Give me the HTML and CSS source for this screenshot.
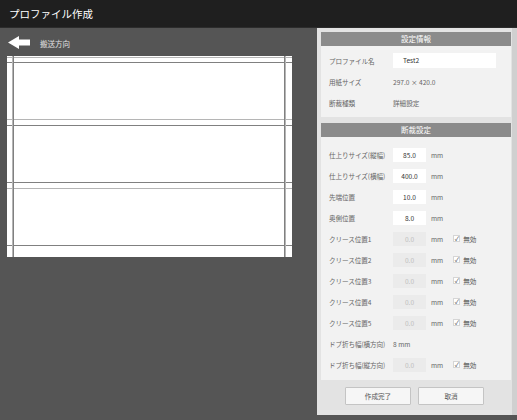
FILE: index.html
```html
<!DOCTYPE html>
<html lang="ja">
<head>
<meta charset="utf-8">
<title>プロファイル作成</title>
<link rel="stylesheet" href="styles.css">
</head>
<body>
<header class="topbar">プロファイル作成</header>
<main class="main">
  <section class="preview">
    <div class="direction">
      <svg class="arrow" width="22" height="13" viewBox="0 0 22 13"><path d="M0 6.5 L11 0 L11 3.5 L22 3.5 L22 9.5 L11 9.5 L11 13 Z" fill="#fff"/></svg>
      <span class="direction-label">搬送方向</span>
    </div>
    <svg class="paper" width="285" height="201" viewBox="0 0 285 201">
      <rect x="0" y="0" width="285" height="201" fill="#fff"/>
      <g stroke-width="1" shape-rendering="crispEdges">
        <line x1="0" y1="1.5" x2="285" y2="1.5" stroke="#b5b5b5"/>
        <line x1="0" y1="6.5" x2="285" y2="6.5" stroke="#808080"/>
        <line x1="0" y1="63.5" x2="285" y2="63.5" stroke="#b5b5b5"/>
        <line x1="0" y1="69.5" x2="285" y2="69.5" stroke="#808080"/>
        <line x1="0" y1="126.5" x2="285" y2="126.5" stroke="#808080"/>
        <line x1="0" y1="132.5" x2="285" y2="132.5" stroke="#b5b5b5"/>
        <line x1="0" y1="189.5" x2="285" y2="189.5" stroke="#808080"/>
        <line x1="5.5" y1="0" x2="5.5" y2="201" stroke="#b5b5b5"/>
        <line x1="6.5" y1="0" x2="6.5" y2="201" stroke="#808080"/>
        <line x1="277.5" y1="0" x2="277.5" y2="201" stroke="#808080"/>
        <line x1="278.5" y1="0" x2="278.5" y2="201" stroke="#b5b5b5"/>
      </g>
    </svg>
  </section>
  <aside class="panel">
    <div class="group">
      <div class="group-title">設定情報</div>
      <div class="group-body group-body-info">
        <div class="row"><span class="label">プロファイル名</span><span class="field field-wide">Test2</span></div>
        <div class="row"><span class="label">用紙サイズ</span><span class="value">297.0 × 420.0</span></div>
        <div class="row"><span class="label">断裁種類</span><span class="value">詳細設定</span></div>
      </div>
    </div>
    <div class="group">
      <div class="group-title">断裁設定</div>
      <div class="group-body group-body-cut">
        <div class="row"><span class="label">仕上りサイズ(縦幅)</span><span class="field">85.0</span><span class="unit">mm</span></div>
        <div class="row"><span class="label">仕上りサイズ(横幅)</span><span class="field">400.0</span><span class="unit">mm</span></div>
        <div class="row"><span class="label">先端位置</span><span class="field">10.0</span><span class="unit">mm</span></div>
        <div class="row"><span class="label">奥側位置</span><span class="field">8.0</span><span class="unit">mm</span></div>
        <div class="row"><span class="label">クリース位置1</span><span class="field field-off">0.0</span><span class="unit">mm</span><span class="check"><span class="box">✓</span>無効</span></div>
        <div class="row"><span class="label">クリース位置2</span><span class="field field-off">0.0</span><span class="unit">mm</span><span class="check"><span class="box">✓</span>無効</span></div>
        <div class="row"><span class="label">クリース位置3</span><span class="field field-off">0.0</span><span class="unit">mm</span><span class="check"><span class="box">✓</span>無効</span></div>
        <div class="row"><span class="label">クリース位置4</span><span class="field field-off">0.0</span><span class="unit">mm</span><span class="check"><span class="box">✓</span>無効</span></div>
        <div class="row"><span class="label">クリース位置5</span><span class="field field-off">0.0</span><span class="unit">mm</span><span class="check"><span class="box">✓</span>無効</span></div>
        <div class="row"><span class="label">ドブ折ち幅(横方向)</span><span class="value">8 mm</span></div>
        <div class="row"><span class="label">ドブ折ち幅(縦方向)</span><span class="field field-off">0.0</span><span class="unit">mm</span><span class="check"><span class="box">✓</span>無効</span></div>
      </div>
    </div>
    <div class="actions">
      <button class="btn">作成完了</button>
      <button class="btn">取消</button>
    </div>
  </aside>
</main>
</body>
</html>
```
FILE: styles.css
```css
* { box-sizing: border-box; }
html, body { margin: 0; padding: 0; }
body {
  width: 517px;
  height: 420px;
  overflow: hidden;
  background: #555555;
  font-family: "Noto Sans CJK JP", "Noto Sans", sans-serif;
  font-size: 6.6px;
  color: #555;
}
.topbar {
  height: 28px;
  background: #1f1f1f;
  color: #fff;
  font-size: 10.5px;
  line-height: 28px;
  padding-left: 9px;
  border-bottom: 1px solid #2c2c2c;
}
.main {
  display: flex;
  height: 392px;
}
.preview {
  width: 317px;
  padding: 8px 0 0 7px;
}
.direction {
  display: flex;
  align-items: center;
  height: 13px;
  padding-left: 1px;
}
.arrow { display: block; }
.direction-label {
  color: #e2e2e2;
  margin-left: 10px;
  font-size: 7.5px;
  line-height: 13px;
  padding-top: 2px;
}
.paper {
  display: block;
  margin-top: 7px;
}
.panel {
  width: 200px;
  height: 387px;
  background: #e3e3e3;
  border-right: 5px solid #d0d0d0;
  padding: 4px 0 0 4px;
  display: flex;
  flex-direction: column;
}
.group {
  width: 190px;
  margin-bottom: 6px;
}
.group-title {
  height: 14px;
  background: #8b8b8b;
  color: #fff;
  text-align: center;
  line-height: 14px;
  font-size: 7.5px;
}
.group-body {
  background: #f2f2f2;
  padding: 4px 0 4px 8px;
}
.group-body-cut {
  padding: 7px 0 5px 8px;
}
.row {
  display: flex;
  align-items: center;
  height: 21px;
}
.label {
  width: 64px;
  flex: none;
  color: #666;
  white-space: nowrap;
  letter-spacing: -0.1px;
}
.value { color: #666; }
.field {
  width: 33px;
  height: 14px;
  background: #fff;
  color: #333;
  text-align: center;
  line-height: 14px;
}
.field-wide {
  width: 103px;
  height: 15px;
  line-height: 15px;
  text-align: left;
  padding-left: 10px;
}
.field-off {
  background: #ebebeb;
  color: #bdbdbd;
}
.unit {
  margin-left: 5px;
  color: #666;
}
.check {
  display: flex;
  align-items: center;
  margin-left: 10px;
  color: #555;
}
.box {
  width: 7px;
  height: 7px;
  background: #fff;
  border: 1px solid #d5d5d5;
  font-size: 6px;
  line-height: 6px;
  text-align: center;
  color: #333;
  margin-right: 3px;
}
.actions {
  display: flex;
  justify-content: center;
  gap: 7px;
  margin-top: 1px;
  padding-right: 4px;
}
.btn {
  width: 66px;
  height: 18px;
  background: #f6f6f6;
  border: 1px solid #c4c4c4;
  border-radius: 1px;
  font-family: "Noto Sans CJK JP", "Noto Sans", sans-serif;
  font-size: 6.6px;
  color: #555;
  padding: 0;
}
```
